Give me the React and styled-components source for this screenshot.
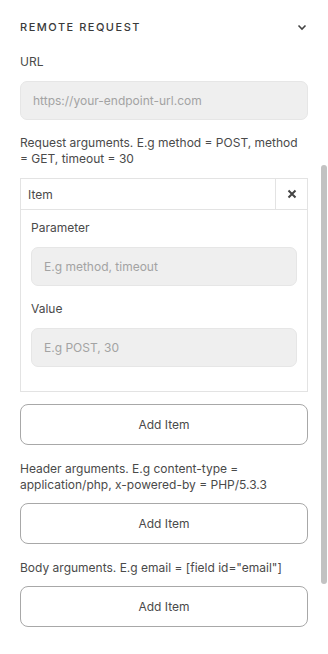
import React from 'react'
import styled, { createGlobalStyle } from 'styled-components'

const GlobalStyle = createGlobalStyle`
  html, body {
    margin: 0;
    padding: 0;
    background: #fff;
  }
  body {
    font-family: Inter, "Noto Sans", sans-serif;
    color: #4a4a4a;
  }
`

const Panel = styled.div`
  position: relative;
  width: 328px;
  height: 654px;
  box-sizing: border-box;
  padding: 17px 20px 0 20px;
  overflow: hidden;
`

const Header = styled.div`
  display: flex;
  align-items: center;
  justify-content: space-between;
  height: 20px;
  margin-bottom: 17px;
`

const Title = styled.h3`
  margin: 0;
  font-size: 11px;
  font-weight: 500;
  letter-spacing: 1.5px;
  text-transform: uppercase;
  color: #3a3a3a;
`

const Chevron = styled.svg`
  width: 10px;
  height: 10px;
  margin-right: 1px;
`

const Label = styled.div`
  font-size: 12px;
  line-height: 16px;
  color: #4a4a4a;
  margin-bottom: 11px;
`

const Input = styled.input`
  display: block;
  width: 100%;
  box-sizing: border-box;
  height: 39px;
  padding: 0 12px;
  border: 1px solid #e6e6e6;
  border-radius: 7px;
  background: #efefef;
  font-family: inherit;
  font-size: 12px;
  color: #333;
  outline: none;
  &::placeholder {
    color: #a3a3a3;
  }
`

const Hint = styled.p`
  margin: ${p => p.$top || 16}px 0 ${p => p.$bottom || 10}px;
  font-size: 12px;
  line-height: 16px;
  color: #4a4a4a;
`

const ItemBox = styled.div`
  border: 1px solid #e3e3e3;
  margin-bottom: 12px;
`

const ItemHead = styled.div`
  display: flex;
  align-items: stretch;
  height: 30px;
  border-bottom: 1px solid #e3e3e3;
`

const ItemTitle = styled.div`
  flex: 1;
  display: flex;
  align-items: center;
  padding-left: 7px;
  font-size: 12px;
  color: #4a4a4a;
`

const CloseCell = styled.button`
  width: 32px;
  border: none;
  border-left: 1px solid #e3e3e3;
  background: transparent;
  display: flex;
  align-items: center;
  justify-content: center;
  padding: 0;
  cursor: pointer;
`

const ItemBody = styled.div`
  padding: 10px 10px 24px;
`

const Field = styled.div`
  & + & {
    margin-top: 15px;
  }
`

const AddButton = styled.button`
  display: block;
  width: 100%;
  height: 41px;
  border: 1px solid #a8a8a8;
  border-radius: 8px;
  background: #fff;
  font-family: inherit;
  font-size: 12px;
  color: #4a4a4a;
  cursor: pointer;
`

const Scrollbar = styled.div`
  position: absolute;
  top: 165px;
  left: 321px;
  width: 6px;
  height: 419px;
  border-radius: 3px;
  background: #c2c2c2;
`

export default function App() {
  return (
    <>
      <GlobalStyle />
      <Panel>
        <Header>
          <Title>Remote Request</Title>
          <Chevron viewBox="0 0 10 10">
            <path d="M1.5 3.5 L5 7 L8.5 3.5" fill="none" stroke="#444" strokeWidth="1.6" />
          </Chevron>
        </Header>

        <Label>URL</Label>
        <Input placeholder="https://your-endpoint-url.com" />

        <Hint $top={15} $bottom={11}>
          Request arguments. E.g method = POST, method = GET, timeout = 30
        </Hint>
        <ItemBox>
          <ItemHead>
            <ItemTitle>Item</ItemTitle>
            <CloseCell aria-label="Remove">
              <svg width="10" height="10" viewBox="0 0 10 10">
                <path d="M1.5 1.5 L8.5 8.5 M8.5 1.5 L1.5 8.5" stroke="#444" strokeWidth="2" />
              </svg>
            </CloseCell>
          </ItemHead>
          <ItemBody>
            <Field>
              <Label>Parameter</Label>
              <Input placeholder="E.g method, timeout" />
            </Field>
            <Field>
              <Label>Value</Label>
              <Input placeholder="E.g POST, 30" />
            </Field>
          </ItemBody>
        </ItemBox>
        <AddButton>Add Item</AddButton>

        <Hint>
          Header arguments. E.g content-type = application/php, x-powered-by = PHP/5.3.3
        </Hint>
        <AddButton>Add Item</AddButton>

        <Hint>Body arguments. E.g email = [field id="email"]</Hint>
        <AddButton>Add Item</AddButton>
      </Panel>
      <Scrollbar />
    </>
  )
}
